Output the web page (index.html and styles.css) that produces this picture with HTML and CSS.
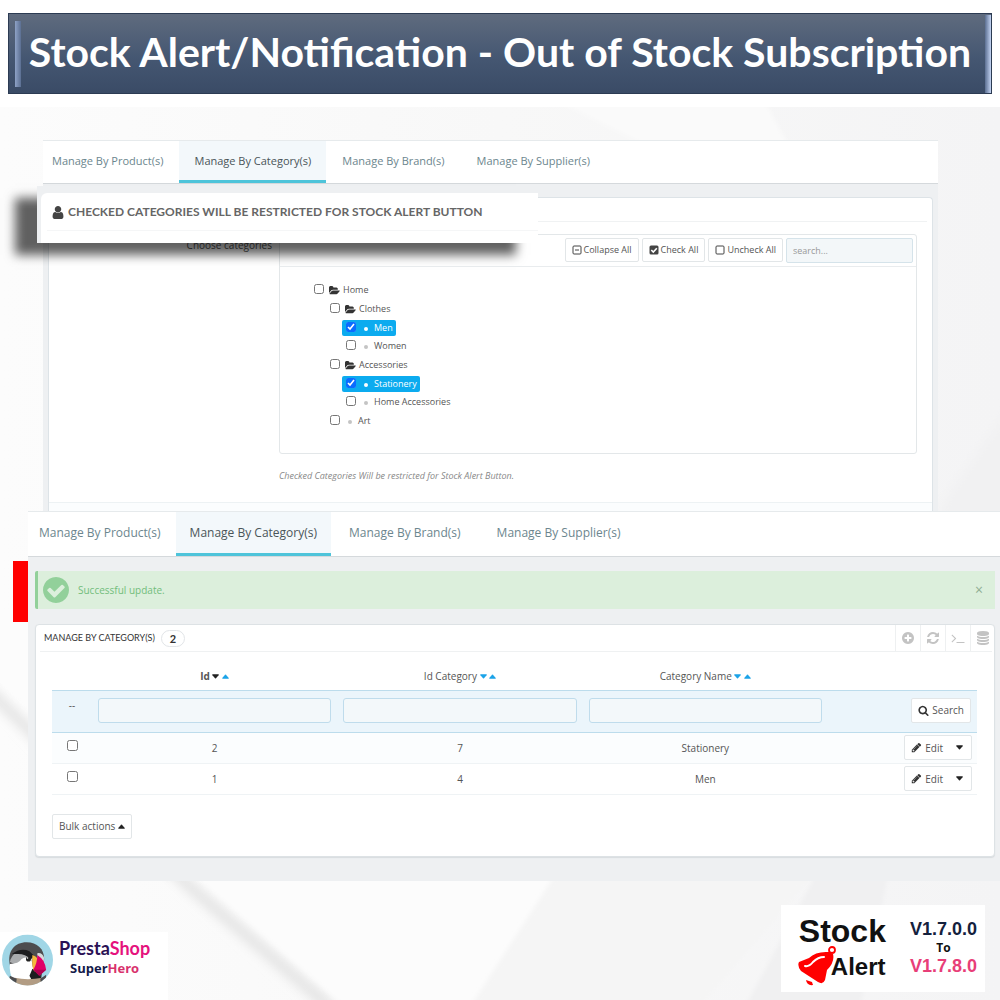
FILE: index.html
```html
<!DOCTYPE html>
<html lang="en">
<head>
<meta charset="utf-8">
<title>Stock Alert/Notification - Out of Stock Subscription</title>
<link rel="stylesheet" href="styles.css">
</head>
<body>
<svg width="0" height="0" class="sprite" aria-hidden="true">
  <symbol id="i-plus" viewBox="0 0 1792 1792"><path d="M1344 960v-128q0-26-19-45t-45-19h-256v-256q0-26-19-45t-45-19h-128q-26 0-45 19t-19 45v256h-256q-26 0-45 19t-19 45v128q0 26 19 45t45 19h256v256q0 26 19 45t45 19h128q26 0 45-19t19-45v-256h256q26 0 45-19t19-45zm320-64q0 209-103 385.5t-279.5 279.5-385.5 103-385.5-103-279.5-279.5-103-385.5 103-385.5 279.5-279.5 385.5-103 385.5 103 279.5 279.5 103 385.5z"/></symbol>
  <symbol id="i-ok" viewBox="128 128 1536 1536"><path d="M1412 734q0-28-18-46l-91-90q-19-19-45-19t-45 19l-408 407-226-226q-19-19-45-19t-45 19l-91 90q-18 18-18 46 0 27 18 45l362 362q19 19 45 19 27 0 46-19l543-543q18-18 18-45zm252 162q0 209-103 385.5t-279.5 279.5-385.5 103-385.5-103-279.5-279.5-103-385.5 103-385.5 279.5-279.5 385.5-103 385.5 103 279.5 279.5 103 385.5z"/></symbol>
  <symbol id="i-refresh" viewBox="0 0 1792 1792"><path d="M1639 1056q0 5-1 7-64 268-268 434.5t-478 166.5q-146 0-282.5-55t-243.5-157l-129 129q-19 19-45 19t-45-19-19-45v-448q0-26 19-45t45-19h448q26 0 45 19t19 45-19 45l-137 137q71 66 161 102t187 36q134 0 250-65t186-179q11-17 53-117 8-23 30-23h192q13 0 22.5 9.5t9.5 22.5zm25-800v448q0 26-19 45t-45 19h-448q-26 0-45-19t-19-45 19-45l138-138q-148-137-349-137-134 0-250 65t-186 179q-11 17-53 117-8 23-30 23h-199q-13 0-22.5-9.5t-9.5-22.5v-7q65-268 270-434.5t480-166.5q146 0 284 55.5t245 156.5l130-129q19-19 45-19t45 19 19 45z"/></symbol>
  <symbol id="i-terminal" viewBox="0 0 1792 1792"><path d="M649 983l-466 466q-10 10-23 10t-23-10l-50-50q-10-10-10-23t10-23l393-393-393-393q-10-10-10-23t10-23l50-50q10-10 23-10t23 10l466 466q10 10 10 23t-10 23zm1079 457v64q0 14-9 23t-23 9h-960q-14 0-23-9t-9-23v-64q0-14 9-23t23-9h960q14 0 23 9t9 23z"/></symbol>
  <symbol id="i-database" viewBox="0 0 1792 1792"><path d="M896 768q237 0 443-43t325-127v170q0 69-103 128t-280 93.500-385 34.500-385-34.500-280-93.500-103-128v-170q119 84 325 127t443 43zm0 768q237 0 443-43t325-127v170q0 69-103 128t-280 93.500-385 34.500-385-34.500-280-93.500-103-128v-170q119 84 325 127t443 43zm0-384q237 0 443-43t325-127v170q0 69-103 128t-280 93.500-385 34.500-385-34.500-280-93.500-103-128v-170q119 84 325 127t443 43zm0-1152q208 0 385 34.500t280 93.500 103 128v128q0 69-103 128t-280 93.500-385 34.500-385-34.500-280-93.500-103-128v-128q0-69 103-128t280-93.500 385-34.500z"/></symbol>
  <symbol id="i-search" viewBox="0 0 1792 1792"><path d="M1216 832q0-185-131.5-316.5t-316.5-131.5-316.5 131.5-131.5 316.5 131.5 316.5 316.500 131.500 316.500-131.500 131.500-316.500zm512 832q0 52-38 90t-90 38q-54 0-90-38l-343-342q-179 124-399 124-143 0-273.500-55.500t-225-150-150-225-55.500-273.500 55.500-273.500 150-225 225-150 273.500-55.500 273.500 55.500 225 150 150 225 55.500 273.500q0 220-124 399l343 343q37 37 37 90z"/></symbol>
  <symbol id="i-pencil" viewBox="0 0 1792 1792"><path d="M491 1536l91-91-235-235-91 91v107h128v128h107zm523-928q0-22-22-22-10 0-17 7l-542 542q-7 7-7 17 0 22 22 22 10 0 17-7l542-542q7-7 7-17zm-54-192l416 416-832 832h-416v-416zm683 96q0 53-37 90l-166 166-416-416 166-165q36-38 90-38 53 0 91 38l235 234q37 39 37 91z"/></symbol>
  <symbol id="i-user" viewBox="256 128 1280 1536"><path d="M1536 1399q0 109-62.500 187t-150.500 78h-854q-88 0-150.500-78t-62.500-187q0-85 8.500-160.500t31.500-152 58.500-131 94-89 134.500-34.500q131 128 313 128t313-128q76 0 134.500 34.500t94 89 58.500 131 31.500 152 8.500 160.500zm-256-887q0 159-112.500 271.500t-271.500 112.500-271.500-112.500-112.500-271.500 112.500-271.500 271.500-112.500 271.500 112.500 112.500 271.500z"/></symbol>
  <symbol id="i-folder" viewBox="0 128 1920 1536"><path d="M1879 952q0 31-31 66l-336 396q-43 51-120.500 86.500t-143.500 35.500h-1088q-34 0-60.500-13t-26.500-43q0-31 31-66l336-396q43-51 120.500-86.500t143.500-35.500h1088q34 0 60.500 13t26.500 43zm-343-344v160h-832q-94 0-197 47.500t-164 119.500l-337 396-5 6q0-4-.5-12.500t-.5-12.500v-960q0-92 66-158t158-66h320q92 0 158 66t66 158v32h544q92 0 158 66t66 158z"/></symbol>
  <symbol id="i-minus-box" viewBox="0 0 10 10"><path fill="none" stroke="currentColor" d="M2 1h6q1 0 1 1v6q0 1-1 1h-6q-1 0-1-1v-6q0-1 1-1zM3 5h4"/></symbol>
  <symbol id="i-check-box" viewBox="0 0 10 10"><rect x="0.500" y="0.500" width="9" height="9" rx="1.500"/><path fill="none" stroke="#fff" stroke-width="1.600" d="M2.300 5l2 2 3.500-3.700"/></symbol>
  <symbol id="i-empty-box" viewBox="0 0 10 10"><path fill="none" stroke="currentColor" d="M2 1h6q1 0 1 1v6q0 1-1 1h-6q-1 0-1-1v-6q0-1 1-1z"/></symbol>
  <symbol id="i-down" viewBox="0 0 8 5"><path d="M0.500 0h7q.5.400 0 1l-3 3.500q-.5.500-1 0l-3-3.500q-.5-.6 0-1z"/></symbol>
  <symbol id="i-up" viewBox="0 0 8 5"><path d="M0.500 5h7q.5-.4 0-1l-3-3.500q-.5-.5-1 0l-3 3.500q-.5.600 0 1z"/></symbol>
</svg>

<header class="banner"><h1>Stock Alert/Notification - Out of Stock Subscription</h1></header>

<main class="scene">
  <svg class="backdrop" viewBox="0 0 1000 893" preserveAspectRatio="none" aria-hidden="true">
    <defs>
      <linearGradient id="base" x1="0" x2="1"><stop offset="0" stop-color="#fcfcfc"/><stop offset=".5" stop-color="#f8f8f8"/><stop offset="1" stop-color="#f4f4f5"/></linearGradient>
      <filter id="soft"><feGaussianBlur stdDeviation="6"/></filter>
      <filter id="edge"><feGaussianBlur stdDeviation="2"/></filter>
    </defs>
    <rect width="1000" height="893" fill="url(#base)"/>
    <path filter="url(#soft)" fill="none" stroke="#dedede" stroke-width="9" d="M-20 575L190 780L330 900"/>
    <path filter="url(#edge)" fill="#fcfcfc" d="M-10 565L200 773L345 900L480 900L560 773L400 600L0 500z"/>
    <path filter="url(#edge)" fill="#f5f5f5" d="M560 760L470 900H700L820 760z"/>
    <path filter="url(#edge)" fill="#f0f0f1" d="M820 760L745 900H860L890 760z"/>
    <path filter="url(#edge)" fill="#fafafa" d="M765 -5L800 60H690L560 -5z"/>
    <path filter="url(#soft)" fill="#f1f1f2" d="M940 400L1010 300V420L940 520z"/>
  </svg>

  <section class="shot shot-form">
    <nav class="tabs">
      <a href="#p1">Manage By Product(s)</a>
      <a href="#c1" class="active">Manage By Category(s)</a>
      <a href="#b1">Manage By Brand(s)</a>
      <a href="#s1">Manage By Supplier(s)</a>
    </nav>
    <div class="form-panel">
      <div class="form-head"></div>
      <div class="form-row">
        <span class="form-label">Choose categories</span>
        <div class="field">
          <div class="tree">
            <div class="tree-tools">
              <button type="button" class="btn small"><svg class="box"><use href="#i-minus-box"/></svg>Collapse All</button>
              <button type="button" class="btn small"><svg class="box"><use href="#i-check-box"/></svg>Check All</button>
              <button type="button" class="btn small"><svg class="box"><use href="#i-empty-box"/></svg>Uncheck All</button>
              <input type="text" class="tree-search" placeholder="search..." aria-label="Search categories">
            </div>
            <ul class="nodes">
              <li><label><input type="checkbox"><svg class="folder"><use href="#i-folder"/></svg>Home</label>
                <ul>
                  <li><label><input type="checkbox"><svg class="folder"><use href="#i-folder"/></svg>Clothes</label>
                    <ul>
                      <li><label class="picked"><input type="checkbox" checked><i class="dot"></i>Men</label></li>
                      <li><label><input type="checkbox"><i class="dot"></i>Women</label></li>
                    </ul>
                  </li>
                  <li><label><input type="checkbox"><svg class="folder"><use href="#i-folder"/></svg>Accessories</label>
                    <ul>
                      <li><label class="picked"><input type="checkbox" checked><i class="dot"></i>Stationery</label></li>
                      <li><label><input type="checkbox"><i class="dot"></i>Home Accessories</label></li>
                    </ul>
                  </li>
                  <li><label><input type="checkbox"><i class="dot"></i>Art</label></li>
                </ul>
              </li>
            </ul>
          </div>
          <p class="hint">Checked Categories Will be restricted for Stock Alert Button.</p>
        </div>
      </div>
      <div class="form-foot"></div>
    </div>
    <div class="callout">
      <h2><svg class="user"><use href="#i-user"/></svg>CHECKED CATEGORIES WILL BE RESTRICTED FOR STOCK ALERT BUTTON</h2>
    </div>
  </section>

  <section class="shot shot-list">
    <i class="marker"></i>
    <nav class="tabs">
      <a href="#p2">Manage By Product(s)</a>
      <a href="#c2" class="active">Manage By Category(s)</a>
      <a href="#b2">Manage By Brand(s)</a>
      <a href="#s2">Manage By Supplier(s)</a>
    </nav>
    <div class="alert" role="status">
      <svg class="ok"><use href="#i-ok"/></svg>
      <span>Successful update.</span>
      <button type="button" class="close" aria-label="Close">×</button>
    </div>
    <div class="list-panel">
      <div class="list-head">
        <h2>MANAGE BY CATEGORY(S)</h2>
        <span class="count">2</span>
        <div class="tools">
          <a href="#add" aria-label="Add new"><svg><use href="#i-plus"/></svg></a>
          <a href="#refresh" aria-label="Refresh list"><svg><use href="#i-refresh"/></svg></a>
          <a href="#sql" aria-label="Show SQL query"><svg><use href="#i-terminal"/></svg></a>
          <a href="#export" aria-label="Export to SQL Manager"><svg><use href="#i-database"/></svg></a>
        </div>
      </div>
      <table>
        <colgroup><col class="c-check"><col><col><col><col class="c-act"></colgroup>
        <thead>
          <tr><th></th>
            <th><b>Id</b> <svg class="caret dark"><use href="#i-down"/></svg> <svg class="caret"><use href="#i-up"/></svg></th>
            <th>Id Category <svg class="caret"><use href="#i-down"/></svg> <svg class="caret"><use href="#i-up"/></svg></th>
            <th>Category Name <svg class="caret"><use href="#i-down"/></svg> <svg class="caret"><use href="#i-up"/></svg></th>
            <th></th></tr>
          <tr class="filter"><td>--</td>
            <td><input type="text" aria-label="Filter by id"></td>
            <td><input type="text" aria-label="Filter by id category"></td>
            <td><input type="text" aria-label="Filter by category name"></td>
            <td class="act"><button type="button" class="btn"><svg class="glyph"><use href="#i-search"/></svg>Search</button></td></tr>
        </thead>
        <tbody>
          <tr><td><input type="checkbox" aria-label="Select row 2"></td><td>2</td><td>7</td><td>Stationery</td>
            <td class="act"><button type="button" class="btn"><svg class="glyph"><use href="#i-pencil"/></svg>Edit<svg class="caret dark more"><use href="#i-down"/></svg></button></td></tr>
          <tr><td><input type="checkbox" aria-label="Select row 1"></td><td>1</td><td>4</td><td>Men</td>
            <td class="act"><button type="button" class="btn"><svg class="glyph"><use href="#i-pencil"/></svg>Edit<svg class="caret dark more"><use href="#i-down"/></svg></button></td></tr>
        </tbody>
      </table>
      <button type="button" class="btn bulk">Bulk actions<svg class="caret dark"><use href="#i-up"/></svg></button>
    </div>
  </section>

  <footer class="brands">
    <div class="presta">
      <svg class="puffin" viewBox="0 0 52 52" aria-hidden="true">
        <defs><clipPath id="disc"><circle cx="26" cy="26" r="26"/></clipPath></defs>
        <g clip-path="url(#disc)">
          <rect width="52" height="52" fill="#a0d6e6"/>
          <path fill="#4d4d4f" d="M8 31C5 17 13 8 25 8c11 0 18 7 18 17l-3 20H12z"/>
          <path fill="#a9abad" d="M8 28c2-9 9-12 17-11l8 8-18 6z"/>
          <path fill="#d8dadb" d="M36 19q5-1 7 5l-1 6-6-5z"/>
          <path fill="#fff" d="M8 30q9 0 12-5 5-3 10 0l2 11-3 11-17 1Q7 39 8 30z"/>
          <path fill="#1d1d1f" d="M10 20q9-7 18-3l6 6-5 2q-6-6-15-5zM31 35l-3 7 2 4h10l-1-5z"/>
          <circle cx="27" cy="25" r="2.600" fill="#222"/>
          <circle cx="26" cy="24" r="0.800" fill="#fff"/>
          <path fill="#f5b83d" d="M31 21q4 1 6 5l-4 12q-3-4-2-17z"/>
          <path fill="#df0067" d="M36 21q8 5 9 15l-7 6-6-6q4-7 4-15z"/>
          <path fill="#b1004f" d="M32 36l13 0-7 6z"/>
          <path fill="#b29c83" d="M13 44q13 3 28 0v9H13z"/>
          <path fill="#4d4d4f" d="M8 42l7 3-1 8H6zM39 45l6-4v11h-5z"/>
        </g>
      </svg>
      <div class="presta-text">
        <p class="presta-name">Presta<span>Shop</span></p>
        <p class="presta-sub">Super<span>Hero</span></p>
      </div>
    </div>
    <div class="product">
      <div class="product-name">
        <p class="stock">Stock</p>
        <p class="alert-word"><svg class="bell" viewBox="0 0 38 41" aria-hidden="true">
          <circle cx="34" cy="4" r="3" fill="none" stroke="#f00" stroke-width="1.800"/>
          <path fill="#f00" d="M31 6Q18 5 11 12L1 16Q-1 20 3 25L20 36Q25 39 27 34L29 24Q37 16 35 8z"/>
          <path fill="none" stroke="#fff" stroke-width="2" stroke-linecap="round" d="M7 20Q11 21 15 16Q20 11 26 11"/>
          <path fill="#f00" d="M8 34q1 6 7 5l-1-3z"/>
        </svg>Alert</p>
      </div>
      <div class="versions">
        <p class="from">V1.7.0.0</p>
        <p class="to">To</p>
        <p class="until">V1.7.8.0</p>
      </div>
    </div>
  </footer>
</main>
</body>
</html>
```
FILE: styles.css
```css
* { box-sizing: border-box; }

body {
  margin: 0;
  min-height: 100vh;
  display: flex;
  flex-direction: column;
  background: #fff;
  color: #555;
  font: 10px/14px "Open Sans", "Noto Sans", sans-serif;
}

h1, h2, p, ul { margin: 0; padding: 0; }
ul { list-style: none; }
a { color: inherit; text-decoration: none; }
svg { fill: currentColor; }
.sprite { position: absolute; }
input, button { font: inherit; color: inherit; }
input[type="checkbox"] { width: 11px; height: 11px; margin: 0; accent-color: #0a6cff; }

/* Title banner with bevelled ends */
.banner {
  margin: 13px 8px;
  padding: 14px 6px 18px;
  border: 1px solid #2c3b53;
  background:
    linear-gradient(90deg, #8ea2c6, #5b6f92) 6px 50% / 6px 66px no-repeat,
    linear-gradient(90deg, #5b6f92, #c3d3f2) 100% 50% / 6px 78px no-repeat,
    linear-gradient(#5f6b7e, #455772 55%, #3a4b66);
}
.banner h1 {
  color: #fff;
  font: bold 41px/47px Lato, "Open Sans", sans-serif;
  text-align: center;
  white-space: nowrap;
}

.scene {
  position: relative;
  flex: 1;
  display: flex;
  flex-direction: column;
  padding-top: 33px;
  isolation: isolate;
}
.backdrop { position: absolute; inset: 0; width: 100%; height: 100%; z-index: -1; }

.shot { position: relative; background: #eef0f2; }
.shot-form { margin: 0 62px 0 43px; }
.shot-list { margin-left: 28px; padding-bottom: 24px; }

/* Tabs */
.tabs {
  display: flex;
  background: #fff;
  border-top: 1px solid #e6eaec;
  border-bottom: 1px solid #d5d9dc;
  color: #6c868e;
}
.tabs a { border-bottom: 3px solid transparent; white-space: nowrap; }
.tabs .active { background: #f3f8fb; color: #4a5559; border-color: #4ec4da; }
.shot-form .tabs { font-size: 11px; line-height: 39px; }
.shot-form .tabs a { padding: 0 16px; }
.shot-form .tabs a:first-child { padding-left: 9px; }
.shot-form .tabs .active { padding: 0 15px; }
.shot-list .tabs { font-size: 12px; line-height: 41px; }
.shot-list .tabs a { padding: 0 18px; }
.shot-list .tabs a:first-child { padding: 0 15px 0 11px; }
.shot-list .tabs .active { padding: 0 14px; }

/* Buttons */
.btn {
  display: inline-flex;
  align-items: center;
  padding: 0 6px;
  height: 25px;
  background: #fff;
  border: 1px solid #e2e6e8;
  border-radius: 2px;
  white-space: nowrap;
}
.small { height: 24px; font-size: 9px; }
.box { width: 10px; height: 10px; margin-right: 2px; color: #444; }
.glyph { width: 11px; height: 11px; margin-right: 3px; color: #333; }
.caret { width: 7px; height: 5px; color: #1ba3e8; vertical-align: 1px; }
.dark { color: #222; }
.more { margin: 0 2px 0 13px; }

/* Category form */
.form-panel {
  margin: 13px 5px 0;
  background: #fff;
  border: 1px solid #dde3e7;
  border-bottom: 0;
  border-radius: 4px 4px 0 0;
}
.form-head { height: 24px; margin: 0 5px; border-bottom: 1px solid #f0f2f3; }
.form-row { display: flex; gap: 7px; padding: 12px 15px 0 0; }
.form-label { width: 223px; padding-top: 4px; text-align: right; line-height: 15px; }
.field { flex: 1; }
.tree { border: 1px solid #e3e7e9; border-radius: 3px; }
.tree-tools {
  display: flex;
  justify-content: flex-end;
  gap: 3px;
  padding: 3px;
  border-bottom: 1px solid #e9ecee;
}
.tree-search {
  width: 127px;
  height: 25px;
  padding: 0 6px;
  background: #f3f7f9;
  border: 1px solid #d5e3ea;
  border-radius: 2px;
  font-size: 9px;
}
.tree-search::placeholder { color: #999; }
.nodes { padding: 14px 30px 22px; font-size: 9px; line-height: 16px; }
.nodes ul { margin: 2px 0; padding-left: 16px; }
.nodes li { padding-top: 1px; }
.nodes label {
  display: flex;
  width: fit-content;
  align-items: center;
  gap: 3px;
  padding: 0 3px;
  border-radius: 2px;
  margin-bottom: 1px;
}
.nodes input[type="checkbox"] { width: 10px; height: 10px; margin: 0 2px 3px 1px; }
.folder { width: 11px; height: 9px; color: #333; }
.dot { width: 4px; height: 4px; margin: 2px 3px 0; border-radius: 50%; background: #c4c4c4; }
.picked { background: #0cabef; color: #fff; }
.picked .dot { background: #fff; }
.hint { padding: 15px 0 19px; font-size: 9px; font-style: italic; color: #888; }
.form-foot { height: 9px; border-top: 1px solid #edf2f4; background: #fbfdfe; }

/* Enlarged panel title laid over the form */
.callout {
  position: absolute;
  top: 46px;
  left: -6px;
  width: 56%;
  padding: 7px 0 0 4px;
  background: #eef0f2;
  box-shadow: -22px 12px 10px rgba(0, 0, 0, .62);
}
.callout h2 {
  display: flex;
  align-items: center;
  gap: 4px;
  padding: 0 11px 12px;
  border-radius: 6px 0 0 0;
  background: linear-gradient(#f5f6f7, #f5f6f7) 6px 37px / 100% 1px no-repeat #fff;
  font: bold 12px/38px Lato, sans-serif;
  color: #666;
  white-space: nowrap;
}
.user { width: 12px; height: 13px; color: #444; }

/* Category list */
.marker { position: absolute; left: -15px; top: 50px; width: 15px; height: 61px; background: #f00; }
.alert {
  display: flex;
  align-items: center;
  gap: 9px;
  margin: 14px 5px 15px 7px;
  padding: 6px 12px 6px 5px;
  background: #dcefdc;
  border-left: 3px solid #92d09a;
  border-radius: 2px 0 0 2px;
  color: #72bd7b;
}
.ok { width: 26px; height: 26px; color: #92d09a; }
.close { margin-left: auto; padding: 0; border: 0; background: none; color: #8fae93; font-size: 14px; }

.list-panel {
  margin: 0 5px 0 7px;
  padding-bottom: 17px;
  background: #fff;
  border: 1px solid #dde2e5;
  border-radius: 4px;
  box-shadow: 0 1px 1px #d8dcdf;
}
.list-head {
  display: flex;
  align-items: center;
  gap: 6px;
  margin: 0 2px 0 4px;
  padding-left: 4px;
  border-bottom: 1px solid #eff1f2;
}
.list-head h2 { font: 9px/26px Lato, sans-serif; color: #333; }
.count {
  padding: 0 8px;
  border: 1px solid #e2e5e8;
  border-radius: 9px;
  font: bold 11px/15px Lato, sans-serif;
  color: #333;
}
.tools { display: flex; margin-left: auto; color: #c3c3c3; }
.tools a { display: flex; align-items: center; height: 26px; padding: 0 5px; border-left: 1px solid #eef0f1; }
.tools svg { width: 14px; height: 14px; }
.tools a:last-child { padding-right: 2px; }

table {
  width: calc(100% - 33px);
  margin: 10px 17px 19px 16px;
  table-layout: fixed;
  border-collapse: collapse;
  text-align: center;
}
.c-check { width: 40px; }
.c-act { width: 149px; }
th, td { padding: 0; height: 31px; font-weight: normal; border-bottom: 1px solid #eff3f5; vertical-align: middle; }
th { height: 28px; border-bottom: 1px solid #bcdcec; }
tbody tr:first-child { background: #fbfdfe; }
td input[type="checkbox"] { display: block; margin: 0 auto 4px; }
.filter { background: #ebf5fb; }
.filter td { height: 42px; padding: 7px 6px 9px; vertical-align: top; border-bottom: 1px solid #bcdcec; }
.filter input { display: block; width: 100%; height: 25px; background: #f3f8fa; border: 1px solid #bfdcec; border-radius: 3px; }
.act { text-align: right; padding-right: 5px; }
.act .btn { vertical-align: middle; }
.bulk { margin-left: 16px; gap: 3px; }

/* Brand footer */
.brands { flex: 1; display: flex; justify-content: space-between; align-items: flex-end; padding: 24px 15px 0 0; }
.presta {
  display: flex;
  align-items: flex-start;
  gap: 6px;
  padding: 2px 18px 14px 2px;
  background: #fff;
}
.puffin { width: 51px; height: 52px; }
.presta-text { padding-top: 4px; text-align: center; }
.presta-name { font: bold 18px/20px Lato, sans-serif; color: #2a1155; }
.presta-name span { color: #e5127d; }
.presta-sub { font: bold 13px/20px "Open Sans", sans-serif; color: #141a4a; }
.presta-sub span { color: #d8316c; }

.product {
  display: flex;
  gap: 24px;
  margin-bottom: 8px;
  padding: 7px 8px 8px 17px;
  background: #fff;
  font-family: "Liberation Sans", Arial, sans-serif;
  font-weight: bold;
  color: #111;
}
.stock { padding-left: 1px; font-size: 32px; line-height: 38px; }
.alert-word { display: flex; align-items: center; font-size: 24px; line-height: 34px; }
.bell { width: 38px; height: 41px; margin: -4px -5px -3px 0; }
.versions { padding-top: 7px; text-align: center; font-size: 18px; line-height: 20px; }
.from { color: #14213d; }
.to { font: bold 12px/18px "Open Sans", sans-serif; }
.until { color: #e83e78; line-height: 18px; }
```
